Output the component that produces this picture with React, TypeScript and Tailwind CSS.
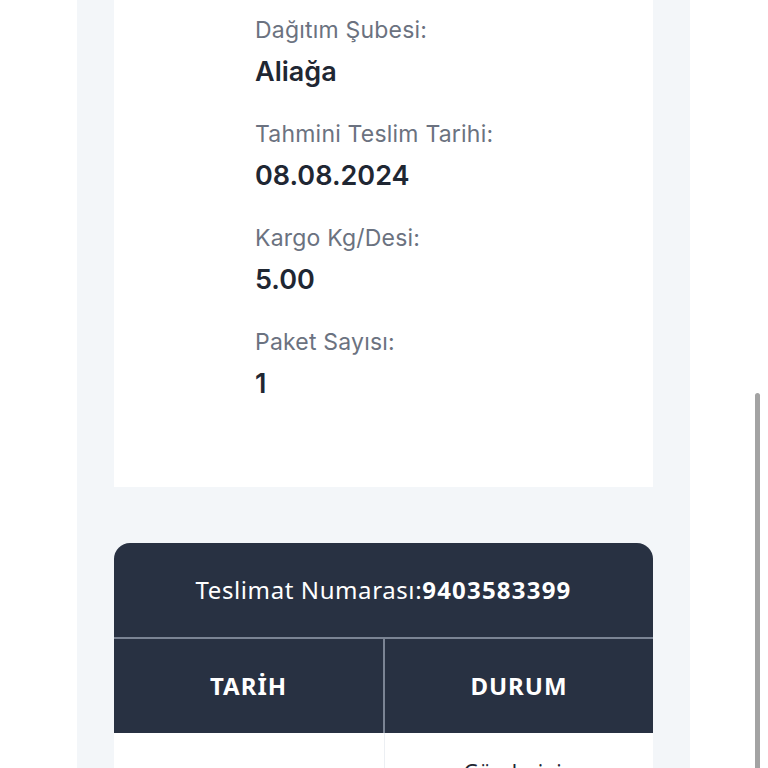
import React from 'react';

const details = [
  { label: 'Dağıtım Şubesi:', value: 'Aliağa' },
  { label: 'Tahmini Teslim Tarihi:', value: '08.08.2024' },
  { label: 'Kargo Kg/Desi:', value: '5.00' },
  { label: 'Paket Sayısı:', value: '1' },
];

export default function App() {
  return (
    <div className="relative h-[768px] w-[768px] overflow-hidden bg-white font-['Inter',sans-serif]">
      <div className="ml-[77px] h-full w-[613px] bg-[#f3f6f9] px-[37px]">
        {/* Shipment info card */}
        <div className="flex flex-col gap-[30px] bg-white pb-[86px] pl-[141px] pt-[15px]">
          {details.map((d) => (
            <div key={d.label} className="flex flex-col gap-[10px]">
              <span className="text-[23px] leading-[30px] tracking-[0.2px] text-[#6b7280]">{d.label}</span>
              <span className="text-[27px] font-semibold leading-[34px] text-[#1f2733]">{d.value}</span>
            </div>
          ))}
        </div>

        {/* Movements table */}
        <div className="mt-[56px] overflow-hidden rounded-t-[16px] font-['Noto_Sans',sans-serif]">
          <div className="flex h-[94px] items-center justify-center bg-[#283142] text-[24px] text-white">
            <span className="tracking-[0.6px]">Teslimat Numarası:</span>
            <span className="font-bold tracking-[1.2px]">9403583399</span>
          </div>
          <div className="grid h-[96px] grid-cols-[271px_1fr] border-t-2 border-[#7b8494] bg-[#283142] text-[24px] font-bold tracking-[1px] text-white">
            <div className="flex items-center justify-center border-r-2 border-[#7b8494]">TARİH</div>
            <div className="flex items-center justify-center">DURUM</div>
          </div>
          <div className="grid h-[60px] grid-cols-[271px_1fr] bg-white text-[21px] text-[#1f2733]">
            <div className="border-r border-[#eceff3]"></div>
            <div className="pt-[24px] text-center">Gönderinin</div>
          </div>
        </div>
      </div>

      {/* scrollbar */}
      <div className="absolute left-[755px] top-[393px] h-[380px] w-[5px] rounded-full bg-[#a3a3a3]"></div>
    </div>
  );
}
